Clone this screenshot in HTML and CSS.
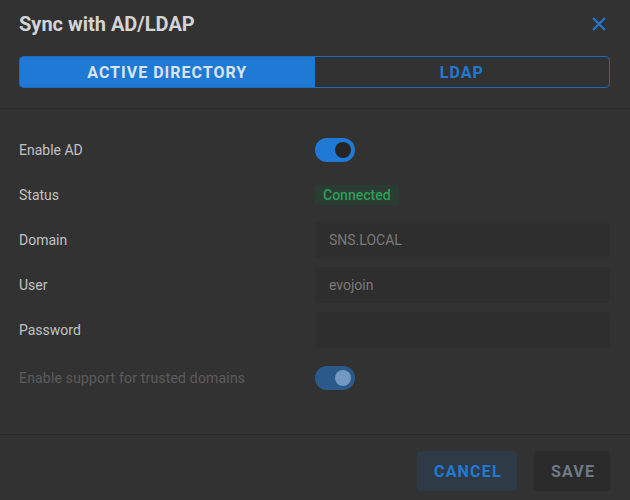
FILE: index.html
```html
<!DOCTYPE html>
<html>
<head>
<meta charset="utf-8">
<link rel="stylesheet" href="styles.css">
</head>
<body>
<div class="dialog">
  <div class="header">
    <h1 class="title">Sync with AD/LDAP</h1>
    <button class="close" aria-label="Close">
      <svg width="14" height="14" viewBox="0 0 14 14"><path d="M1 1 L13 13 M13 1 L1 13" stroke="#1f7ad6" stroke-width="2" fill="none"/></svg>
    </button>
  </div>
  <div class="tabs">
    <div class="tab active">ACTIVE DIRECTORY</div>
    <div class="tab">LDAP</div>
  </div>
  <div class="body">
    <div class="row">
      <div class="label">Enable AD</div>
      <div class="control"><span class="toggle on"><span class="knob"></span></span></div>
    </div>
    <div class="row">
      <div class="label">Status</div>
      <div class="control"><span class="badge">Connected</span></div>
    </div>
    <div class="row">
      <div class="label">Domain</div>
      <div class="control"><div class="input">SNS.LOCAL</div></div>
    </div>
    <div class="row">
      <div class="label">User</div>
      <div class="control"><div class="input">evojoin</div></div>
    </div>
    <div class="row">
      <div class="label">Password</div>
      <div class="control"><div class="input"></div></div>
    </div>
    <div class="row last">
      <div class="label disabled">Enable support for trusted domains</div>
      <div class="control"><span class="toggle dim"><span class="knob"></span></span></div>
    </div>
  </div>
  <div class="footer">
    <button class="btn cancel">CANCEL</button>
    <button class="btn save">SAVE</button>
  </div>
</div>
</body>
</html>
```
FILE: styles.css
```css
* { box-sizing: border-box; }
html, body { margin: 0; padding: 0; }
body {
  background: #323232;
  font-family: Roboto, "Liberation Sans", sans-serif;
  width: 630px;
  height: 500px;
  overflow: hidden;
}
.dialog { width: 630px; }
.header {
  display: flex;
  justify-content: space-between;
  align-items: center;
  padding: 12px 24px 0 19px;
  height: 36px;
}
.title {
  margin: 0;
  font-size: 20px;
  font-weight: 700;
  line-height: 24px;
  color: #d4d4d4;
}
.close {
  background: none;
  border: 0;
  padding: 0;
  width: 14px;
  height: 14px;
  display: flex;
}
.tabs {
  margin: 20px 20px 0 19px;
  height: 32px;
  display: flex;
  border: 1px solid #1f6ab8;
  border-radius: 4px;
  overflow: hidden;
}
.tab {
  flex: 1;
  display: flex;
  align-items: center;
  justify-content: center;
  font-size: 16px;
  font-weight: 700;
  letter-spacing: 1px;
  color: #1f7ad6;
}
.tab.active {
  background: #1f7ad6;
  color: #dde3ea;
}
.body {
  margin-top: 20px;
  border-top: 1px solid #2a2a2a;
  border-bottom: 1px solid #2a2a2a;
  padding: 23px 20px 38px 19px;
  display: flex;
  flex-direction: column;
  gap: 9px;
}
.row {
  display: grid;
  grid-template-columns: 296px 1fr;
  align-items: center;
  min-height: 36px;
}
.row.last { margin-top: 3px; }
.label {
  font-size: 14px;
  color: #c2c2c2;
}
.label.disabled { color: #5c5c5c; letter-spacing: 0.18px; }
.control { display: flex; align-items: center; }
.toggle {
  width: 40px;
  height: 24px;
  border-radius: 12px;
  display: flex;
  align-items: center;
  justify-content: flex-end;
  padding-right: 4px;
}
.toggle .knob {
  width: 16px;
  height: 16px;
  border-radius: 50%;
}
.toggle.on { background: #1f7ad6; }
.toggle.on .knob { background: #252525; }
.toggle.dim { background: #2b5a8a; }
.toggle.dim .knob { background: #7399c2; }
.badge {
  height: 20px;
  line-height: 20px;
  padding: 0 8px;
  border-radius: 3px;
  background: #2b3d33;
  color: #2e9d5c;
  font-size: 14px;
  font-weight: 500;
}
.input {
  width: 100%;
  height: 36px;
  line-height: 36px;
  border-radius: 4px;
  background: #2e2e2e;
  padding-left: 14px;
  font-size: 14px;
  color: #7a7a7a;
}
.footer {
  display: flex;
  justify-content: flex-end;
  gap: 17px;
  padding: 16px 20px 0 0;
}
.btn {
  height: 40px;
  border: 0;
  border-radius: 4px;
  font-family: Roboto, "Liberation Sans", sans-serif;
  font-size: 16px;
  font-weight: 700;
  letter-spacing: 1.2px;
  padding: 0 17px;
}
.cancel { background: #2f3a47; color: #1f7ad6; width: 100px; }
.save { background: #2a2a2a; color: #6e7a86; width: 76px; }
```
